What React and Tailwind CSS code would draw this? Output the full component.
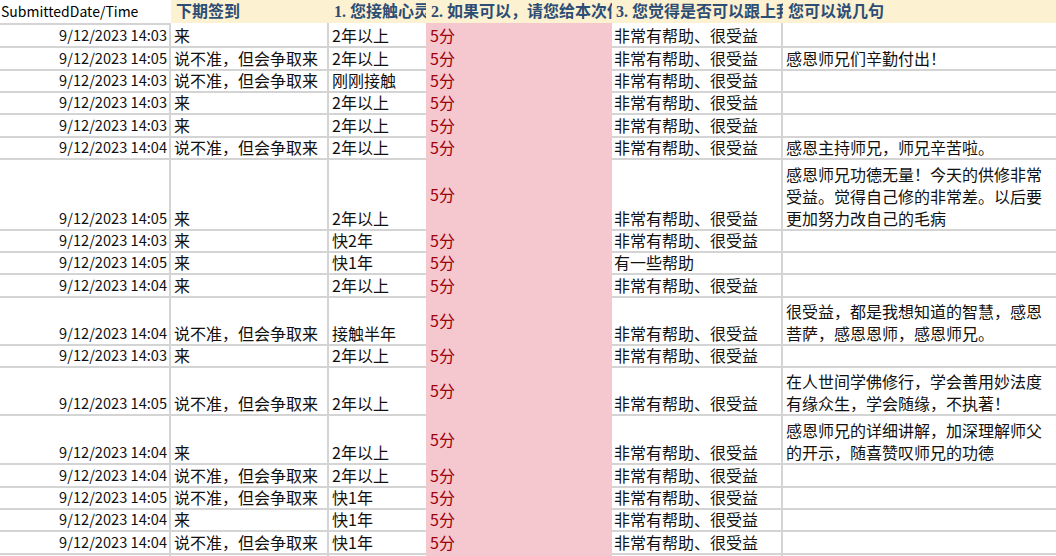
import React from "react";

const HELP = "非常有帮助、很受益";
const MAYBE = "说不准，但会争取来";

const rows = [
  { h: "h-[23px]", t: "14:03", b: "来", c: "2年以上", e: HELP, f: [] },
  { h: "h-[23px]", t: "14:05", b: MAYBE, c: "2年以上", e: HELP, f: ["感恩师兄们辛勤付出！"] },
  { h: "h-[22px]", t: "14:03", b: MAYBE, c: "刚刚接触", e: HELP, f: [] },
  { h: "h-[22px]", t: "14:03", b: "来", c: "2年以上", e: HELP, f: [] },
  { h: "h-[23px]", t: "14:03", b: "来", c: "2年以上", e: HELP, f: [] },
  { h: "h-[22px]", t: "14:04", b: MAYBE, c: "2年以上", e: HELP, f: ["感恩主持师兄，师兄辛苦啦。"] },
  {
    h: "h-[71px]",
    t: "14:05",
    b: "来",
    c: "2年以上",
    e: HELP,
    f: ["感恩师兄功德无量！今天的供修非常", "受益。觉得自己修的非常差。以后要", "更加努力改自己的毛病"],
  },
  { h: "h-[22px]", t: "14:03", b: "来", c: "快2年", e: HELP, f: [] },
  { h: "h-[22px]", t: "14:05", b: "来", c: "快1年", e: "有一些帮助", f: [] },
  { h: "h-[23px]", t: "14:04", b: "来", c: "2年以上", e: HELP, f: [] },
  {
    h: "h-[48px]",
    t: "14:04",
    b: MAYBE,
    c: "接触半年",
    e: HELP,
    f: ["很受益，都是我想知道的智慧，感恩", "菩萨，感恩恩师，感恩师兄。"],
  },
  { h: "h-[22px]", t: "14:03", b: "来", c: "2年以上", e: HELP, f: [] },
  {
    h: "h-[48px]",
    t: "14:05",
    b: MAYBE,
    c: "2年以上",
    e: HELP,
    f: ["在人世间学佛修行，学会善用妙法度", "有缘众生，学会随缘，不执著！"],
  },
  {
    h: "h-[49px]",
    t: "14:04",
    b: "来",
    c: "2年以上",
    e: HELP,
    f: ["感恩师兄的详细讲解，加深理解师父", "的开示，随喜赞叹师兄的功德"],
  },
  { h: "h-[23px]", t: "14:04", b: MAYBE, c: "2年以上", e: HELP, f: [] },
  { h: "h-[22px]", t: "14:05", b: MAYBE, c: "快1年", e: HELP, f: [] },
  { h: "h-[22px]", t: "14:04", b: "来", c: "快1年", e: HELP, f: [] },
  { h: "h-[23px]", t: "14:04", b: MAYBE, c: "快1年", e: HELP, f: [] },
  { h: "h-[23px]", t: "14:04", b: "来", c: "2年以上", e: HELP, f: [] },
];

const GRID = "grid grid-cols-[171px_158px_97px_186px_171px_273px]";

function Header() {
  const hc =
    "h-[23px] bg-[#fcf1d0] flex items-center whitespace-nowrap overflow-hidden font-bold text-[#2c4d75] font-['Liberation_Serif','Noto_Sans_CJK_SC',serif] text-[16px]";
  return (
    <div className={GRID}>
      <div className="h-[23px] flex items-center pl-[1px] whitespace-nowrap overflow-hidden text-[14px] text-black">
        SubmittedDate/Time
      </div>
      <div className={`${hc} pl-[5px]`}>下期签到</div>
      <div className={`${hc} pl-[5px]`}>1. 您接触心灵法门多久了？</div>
      <div className={`${hc} pl-[5px]`}>2. 如果可以，请您给本次供修打分</div>
      <div className={`${hc} pl-[4px]`}>3. 您觉得是否可以跟上我们的进度？</div>
      <div className={`${hc} pl-[5px]`}>您可以说几句</div>
    </div>
  );
}

function Row({ r, first }) {
  const top = first ? "" : "border-t-2";
  const base = "flex items-end whitespace-nowrap overflow-hidden border-[#d4d4d4] leading-[22px]";
  return (
    <div className={`${GRID} ${r.h}`}>
      <div className={`${base} border-t-2 border-r-2 justify-end pr-[2px] text-[14.6px]`}>9/12/2023 {r.t}</div>
      <div className={`${base} ${top} border-r-2 pl-[3px]`}>{r.b}</div>
      <div className={`${base} ${top} pl-[3px]`}>{r.c}</div>
      <div className="flex items-center bg-[#f5c7ce] pl-[4px] text-[#9c0006] whitespace-nowrap leading-[22px]">
        5分
      </div>
      <div className={`${base} ${top} border-r-2 pl-[2px]`}>{r.e}</div>
      <div className={`${base} ${top} pl-[3px]`}>
        <div className="flex flex-col">
          {r.f.map((l, i) => (
            <span key={i}>{l}</span>
          ))}
        </div>
      </div>
    </div>
  );
}

export default function App() {
  return (
    <div className="w-[1056px] h-[556px] overflow-hidden bg-white text-[16px] text-[#111] font-['Noto_Sans_CJK_SC','Liberation_Sans',sans-serif]">
      <Header />
      {rows.map((r, i) => (
        <Row key={i} r={r} first={i === 0} />
      ))}
    </div>
  );
}
